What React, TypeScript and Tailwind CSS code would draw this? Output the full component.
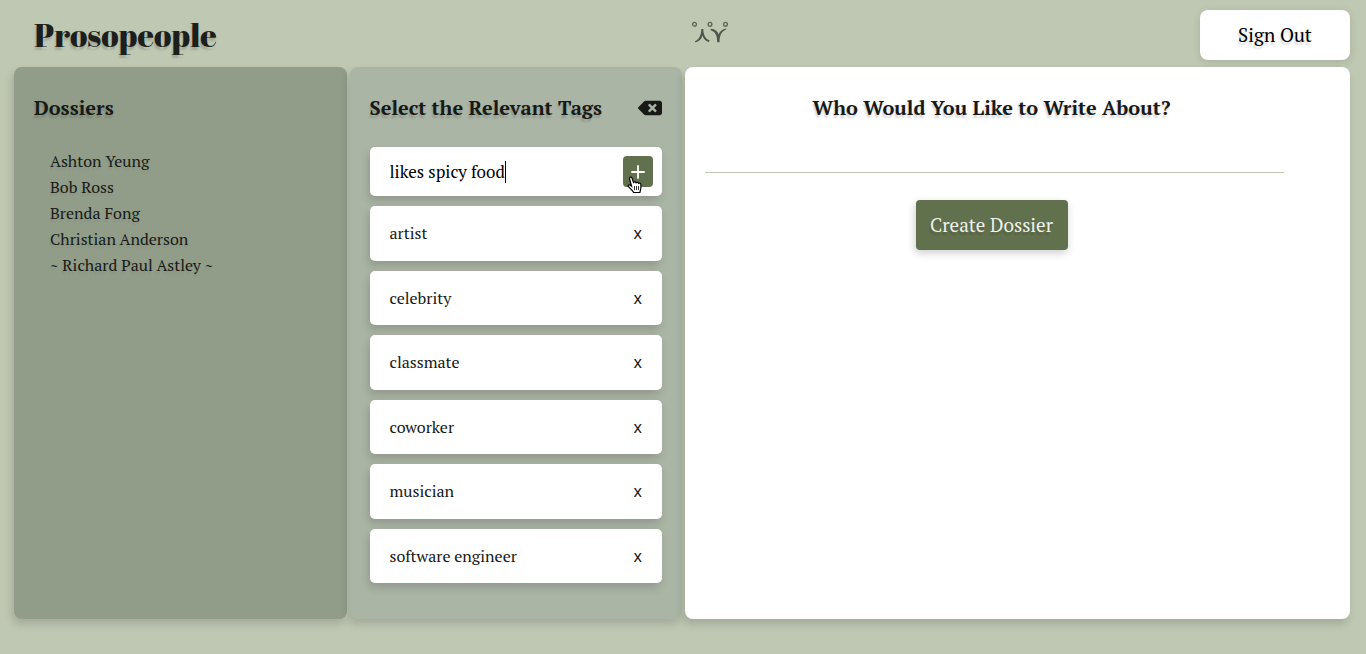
import React, { useState } from "react";
import { FaBackspace } from "react-icons/fa";

const people = ["Ashton Yeung", "Bob Ross", "Brenda Fong", "Christian Anderson", "~ Richard Paul Astley ~"];
const initialTags = ["artist", "celebrity", "classmate", "coworker", "musician", "software engineer"];

function Logo() {
  return (
    <svg className="h-6 w-10" viewBox="0 0 40 24" fill="none" stroke="#4c5549" aria-hidden="true">
      <g strokeWidth="1.3" stroke="#596254">
        <circle cx="4.5" cy="3.3" r="1.9" />
        <circle cx="20" cy="3.3" r="1.9" />
        <circle cx="35.5" cy="3.3" r="1.9" />
      </g>
      <g fill="#4c5549" stroke="none">
        <path d="M11.300 8H13.300C13.300 13.500 15.500 18.500 19.800 19.200L18.500 21C15.500 20 13.300 17.500 12.600 14.500C11.500 18 9 20.800 5 21.300V20.200C9 18.600 11.300 14 11.300 8Z" />
        <path d="M20.200 9L21.500 7.800C25.500 8.500 27.800 10.500 28.600 13.500C29.800 10.500 32.500 8 36.200 7.600V8.400C31.800 10 29.500 14 29.500 21.200H27.200C27.200 14 25 10.500 20.200 9Z" />
      </g>
    </svg>
  );
}

function HandPointer() {
  return (
    <svg className="pointer-events-none absolute top-5 left-1 h-[18px] w-4" viewBox="0 0 16 18" aria-hidden="true">
      <path
        d="M4.500 10L2.600 3C2.100 .8 4.500 .3 5 2.100L6.500 6.500C7.200 5.500 8.700 5.700 9.100 6.700C9.900 6 11.200 6.200 11.600 7.300C12.500 6.700 13.700 7.200 13.900 8.500C14.300 11 14 13 12.900 16.500H6.600C5.600 14.500 3.500 13 1.500 10.700C.6 9.100 2.500 8 4.500 10Z"
        fill="#fff"
        stroke="#000"
        strokeWidth="1.2"
      />
      <path d="M7.500 10v4M9.500 10v4M11.500 10v4" stroke="#000" strokeWidth=".8" />
    </svg>
  );
}

export default function App() {
  const [tags, setTags] = useState(initialTags);
  const [draft, setDraft] = useState("likes spicy food");
  const [name, setName] = useState("");

  const addTag = (event: React.FormEvent) => {
    event.preventDefault();
    if (draft.trim()) setTags([...tags, draft.trim()]);
    setDraft("");
  };

  return (
    <div className="flex min-h-screen flex-col bg-[#bfc8b3] pr-4 pb-[35px] pl-[14px] font-['PT_Serif','Liberation_Serif',serif] text-base text-[#171917]">
      <header className="grid grid-cols-[1fr_auto_1fr] items-center pt-2.5 pb-[7px]">
        <h1 className="pl-5 font-['Abril_Fatface','Liberation_Serif',serif] text-[32px] leading-10 font-normal text-[#1d1f1d] text-shadow-[-1px_3px_2px_rgb(0_0_0/0.15)]">
          Prosopeople
        </h1>
        <div className="translate-x-7 -translate-y-0.5">
          <Logo />
        </div>
        <button className="h-[50px] w-[150px] justify-self-end rounded-lg bg-white text-[19px] text-black shadow-[0_2px_8px_rgb(0_0_0/0.12)] text-shadow-[-1px_3px_2px_rgb(0_0_0/0.15)]">
          Sign Out
        </button>
      </header>

      <main className="grid flex-1 grid-cols-[1fr_1fr_2fr] gap-[3px]">
        <section className="rounded-lg bg-[#919d88] px-5 pt-[25px] shadow-[-2px_5px_8px_rgb(0_0_0/0.15)]">
          <h2 className="text-xl leading-8 font-bold text-shadow-[-1px_3px_2px_rgb(0_0_0/0.15)]">Dossiers</h2>
          <ul className="mt-6 pl-4 leading-[26px] text-shadow-[-1px_3px_2px_rgb(0_0_0/0.05)]">
            {people.map((person) => (
              <li key={person}>
                <a href="#dossier">{person}</a>
              </li>
            ))}
          </ul>
        </section>

        <section className="flex flex-col rounded-lg bg-[#abb5a5] px-5 pt-[25px] pb-9 shadow-[-2px_5px_8px_rgb(0_0_0/0.15)]">
          <div className="flex items-center justify-between">
            <h2 className="text-xl leading-8 font-bold whitespace-nowrap text-shadow-[-1px_3px_2px_rgb(0_0_0/0.15)]">
              Select the Relevant Tags
            </h2>
            <button aria-label="Clear tags" onClick={() => setTags([])}>
              <FaBackspace className="h-5 w-6" />
            </button>
          </div>
          <form
            onSubmit={addTag}
            className="mt-[23px] flex h-[49px] items-center rounded-[5px] bg-white pr-[9px] pl-5 shadow-[-2px_5px_8px_rgb(0_0_0/0.15)]"
          >
            <input
              aria-label="New tag"
              value={draft}
              onChange={(event) => setDraft(event.target.value)}
              className="field-sizing-content text-[17px] text-black outline-none"
            />
            <span className="h-[22px] w-px bg-black" />
            <div className="relative ml-auto">
              <button aria-label="Add tag" className="flex h-[31px] w-[30px] items-center justify-center rounded bg-[#62714d]">
                <svg className="size-4" viewBox="0 0 16 16" stroke="#fff" strokeWidth="1.800" strokeLinecap="round">
                  <path d="M8 2v12M2 8h12" />
                </svg>
              </button>
              <HandPointer />
            </div>
          </form>
          <ul className="mt-2.5 grid flex-1 auto-rows-fr gap-2.5">
            {tags.map((tag) => (
              <li
                key={tag}
                className="flex min-h-[54px] items-center justify-between rounded-[5px] bg-white px-5 shadow-[-2px_5px_8px_rgb(0_0_0/0.15)]"
              >
                {tag}
                <button
                  aria-label={`Remove ${tag}`}
                  onClick={() => setTags(tags.filter((other) => other !== tag))}
                  className="font-['Noto_Sans',sans-serif] text-base"
                >
                  x
                </button>
              </li>
            ))}
          </ul>
        </section>

        <section className="rounded-lg bg-white pt-[25px] pr-[66px] pl-5 shadow-[-2px_5px_8px_rgb(0_0_0/0.15)]">
          <form onSubmit={(event) => event.preventDefault()} className="flex flex-col items-center">
            <label htmlFor="name" className="pr-1.5 text-xl leading-8 font-bold text-shadow-[-1px_3px_2px_rgb(0_0_0/0.15)]">
              Who Would You Like to Write About?
            </label>
            <input
              id="name"
              value={name}
              onChange={(event) => setName(event.target.value)}
              className="mt-[15px] h-[34px] w-full border-b border-[#bfc8b3] outline-none"
            />
            <div className="mt-[27px] pr-1.5">
              <button className="h-[50px] w-[152px] rounded bg-[#62714d] text-[19px] text-[#f0f2ee] shadow-[-1px_3px_8px_rgb(0_0_0/0.2)] text-shadow-[-1px_3px_2px_rgb(0_0_0/0.15)]">
                Create Dossier
              </button>
            </div>
          </form>
        </section>
      </main>
    </div>
  );
}
